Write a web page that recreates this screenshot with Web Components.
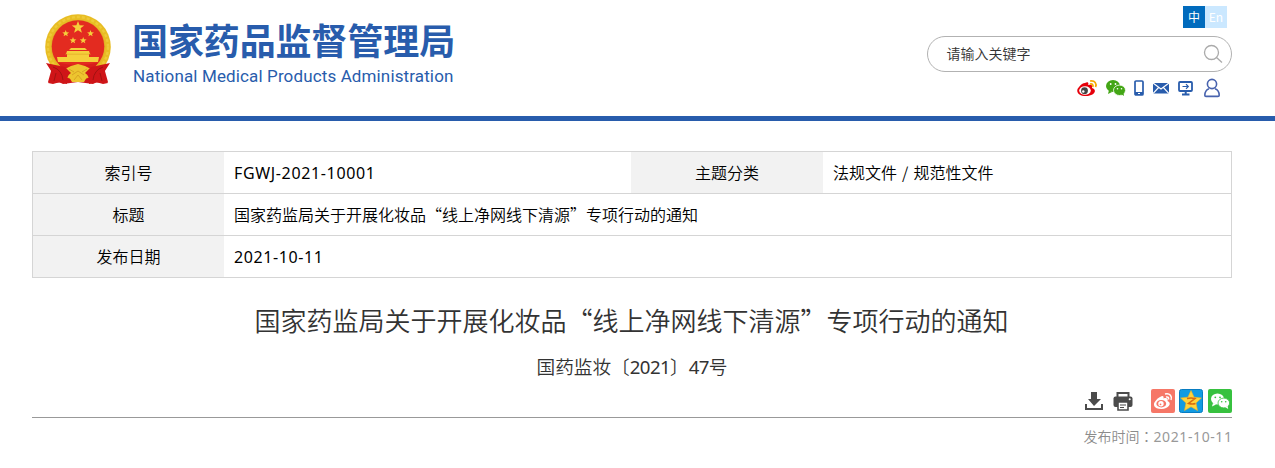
<!DOCTYPE html>
<html lang="zh-CN"><head><meta charset="utf-8"><title>国家药监局关于开展化妆品“线上净网线下清源”专项行动的通知</title>
<style>
body{margin:0;width:1275px;height:468px;overflow:hidden;background:#fff;color:#000;font-family:"Noto Sans CJK SC","Noto Sans",sans-serif;font-weight:350}
</style></head><body>
<site-header></site-header>
<info-table></info-table>
<notice-heading><span slot="title">国家药监局关于开展化妆品“线上净网线下清源”专项行动的通知</span></notice-heading>
<notice-tools></notice-tools>
<script>
const define=(name,html)=>{const t=document.createElement('template');t.innerHTML=html;
customElements.define(name,class extends HTMLElement{constructor(){super();this.attachShadow({mode:'open'}).appendChild(t.content.cloneNode(true))}})};

define('national-emblem',`<style>:host{display:block;width:68px;height:72px}svg{display:block}</style>
<svg width="68" height="72" viewBox="0 0 68 72">
<path d="M9 51L4 69l9-1 6 3 15-2 15 2 6-3 9 1-5-18z" fill="#cf1518"/>
<circle cx="34" cy="34" r="32.800" fill="#e8bd24"/>
<circle cx="34" cy="34" r="30" fill="none" stroke="#eeca38" stroke-width="2.400" stroke-dasharray="3 2"/>
<circle cx="34" cy="34" r="26.800" fill="none" stroke="#d9a727" stroke-width=".6"/>
<circle cx="34" cy="33.500" r="26.300" fill="#e32b20"/>
<g fill="#f5cf3b"><path id="s" d="M34 8l1.600 4.300 4.600.2-3.600 2.800 1.300 4.400L34 17.200l-3.900 2.500 1.300-4.400-3.600-2.800 4.600-.2z"/>
<use href="#s" transform="translate(3 12.500) scale(.55)"/><use href="#s" transform="translate(27.800 12.500) scale(.55)"/><use href="#s" transform="translate(10.300 19.500) scale(.55)"/><use href="#s" transform="translate(20.500 19.500) scale(.55)"/>
<path d="M25 37l2-2h14l2 2zM23 38h22l1 3H22zM23 41h22v3H23zM13 44h42l-1 5H14z"/></g>
<path d="M21 41.200h26" stroke="#d99520" stroke-width=".5"/>
<path d="M14 49.500q20 5 40 0-4 7-13 12l-7 6-7-6q-9-5-13-12z" fill="#d81e1c"/>
<path d="M21 56l6-3 7-2 7 2 6 3-5 4 1 4-3 5H28l-3-5 1-4z" fill="#edc52f"/>
<path d="M28 62l6-4 6 4M30 67l4-5 4 5M25 56l5 3M43 56l-5 3" fill="none" stroke="#d39b22" stroke-width=".8"/>
<path d="M2 50q9 2 19 4l6 6q-5 3-4 11-7-3-14 0l-5-1 5-9zM66 50q-9 2-19 4l-6 6q5 3 4 11 7-3 14 0l5-1-5-9z" fill="#cf1518"/>
<path d="M9 54q9 3 10 13M12 60l-2 8M59 54q-9 3-10 13M56 60l2 8" fill="none" stroke="#a11211"/>
</svg>`);

define('site-logo',`<style>:host{display:flex;color:#285cac}.words{margin-left:20px;padding-top:5px;white-space:nowrap}
.cn{font-size:36px;font-weight:700;line-height:42px;letter-spacing:-.1px}.en{font:17px/20px Roboto,"Liberation Sans",sans-serif;letter-spacing:.13px;margin:6px 0 0 1px}</style>
<national-emblem></national-emblem><div class="words"><div class="cn">国家药品监督管理局</div><div class="en">National Medical Products Administration</div></div>`);

define('language-switch',`<style>:host{display:flex;margin-right:5px;font-size:12px;font-weight:400;line-height:22px;text-align:center;color:#fff}span{width:22px;height:22px;background:#006bbd}.en{background:#cbe8ff}</style><span>中</span><span class="en">En</span>`);

define('search-box',`<style>:host{display:flex;box-sizing:border-box;width:305px;height:36px;border:1px solid #b2b2b2;border-radius:18px;align-items:center;justify-content:space-between;padding:0 8px 0 18.500px;font-size:14px;line-height:20px;color:#333}span{margin-top:-2px}</style>
<span>请输入关键字</span><svg width="20" height="20" fill="none" stroke="#aaa" stroke-width="1.300"><circle cx="8.500" cy="8.500" r="7"/><path d="M13.500 13.500l5.500 5"/></svg>`);

define('quick-links',`<style>:host{display:flex;align-items:center;height:20px;margin:6px 11px 0 0}svg{display:block}</style>
<svg width="21" height="18"><path d="M8 4c3-2 4 0 3 2 3-1 5 0 4 3 6 2 2 8-6 8S-2 12 2 8q3-4 6-4z" fill="#e6000b"/><ellipse cx="8" cy="11.500" rx="5.800" ry="4.300" fill="#fff"/><circle cx="7.500" cy="11.700" r="3.400" fill="#444"/><circle cx="6.300" cy="12.500" r="1.200" fill="#fff"/><path d="M13 2c5-1 7 3 5.500 6M13 5c2.500-.5 3.500 1 2.800 3" fill="none" stroke="#f5a900" stroke-width="1.700"/></svg>
<svg style="margin-left:8px" width="20" height="18"><g fill="#43a615"><ellipse cx="7" cy="7" rx="7" ry="6"/><path d="M3 11l-1 4 4-2z"/></g><ellipse cx="13.500" cy="11.300" rx="6" ry="5.200" fill="#43a615" stroke="#fff" stroke-width=".8"/><path d="M15 15l3 2-.5-3z" fill="#43a615"/><g fill="#fff"><circle cx="4.700" cy="5" r=".9"/><circle cx="9.500" cy="5" r=".9"/><circle cx="11.500" cy="9.800" r=".8"/><circle cx="15.500" cy="9.800" r=".8"/></g></svg>
<svg style="margin-left:8px" width="11" height="18"><rect x="1" y="2" width="8" height="14" rx="1" fill="none" stroke="#285cac" stroke-width="1.700"/><path d="M1 14.500h8" stroke="#285cac" stroke-width="3"/><path d="M4 14.500h2" stroke="#fff"/></svg>
<svg style="margin-left:8px" width="16" height="18"><path d="M0 4h16v10.500H0z" fill="#285cac"/><path d="M0 4l8 6 8-6M0 14.500l5.600-6M16 14.500l-5.600-6" fill="none" stroke="#fff" stroke-width="1.100"/></svg>
<svg style="margin-left:9px" width="16" height="18"><rect x="1" y="3" width="13" height="9" rx="1" fill="none" stroke="#285cac" stroke-width="1.800"/><path d="M4.500 7.500h6M8 5.200l2.300 2.300L8 9.800" fill="none" stroke="#285cac" stroke-width="1.200"/><path d="M4 15.500h7.500M7.700 12v3" fill="none" stroke="#285cac" stroke-width="2"/></svg>
<svg style="margin-left:10px" width="17" height="20"><circle cx="8" cy="6" r="4.600" fill="none" stroke="#4863ae" stroke-width="1.600"/><path d="M5 10.700C1.500 12 .9 14 .8 17.200q0 1.200 1.200 1.200h12q1.200 0 1.200-1.200C15.200 14 14.500 12 11 10.700" fill="none" stroke="#4863ae" stroke-width="1.600"/></svg>`);

define('site-header',`<style>:host{display:flex;box-sizing:border-box;height:121px;border-bottom:5px solid #285cac;justify-content:space-between;padding:0 43px 0 44px}site-logo{margin-top:13px}.right{display:flex;flex-direction:column;align-items:flex-end;padding-top:6px}search-box{margin-top:8px}</style>
<site-logo></site-logo><div class="right"><language-switch></language-switch><search-box></search-box><quick-links></quick-links></div>`);

define('info-table',`<style>:host{display:block;width:1198px;margin:30px 0 0 32px;border:1px solid #d5d5d5;font-size:16px;line-height:41px}
.row{display:grid;grid-template-columns:191px 1fr;grid-template-rows:41px;height:41px}.row+.row{border-top:1px solid #d5d5d5}.four{grid-template-columns:191px 407px 192px 1fr}b{font-weight:inherit;text-align:center;background:#f2f2f2}span{padding-left:10px}.lat{font-family:"Noto Sans","Noto Sans CJK SC",sans-serif;font-weight:400;line-height:43px}.code{letter-spacing:.65px}.date{letter-spacing:.6px}.cat{word-spacing:1.500px}</style>
<div class="row four"><b>索引号</b><span class="lat code">FGWJ-2021-10001</span><b>主题分类</b><span class="cat">法规文件 / 规范性文件</span></div>
<div class="row"><b>标题</b><span>国家药监局关于开展化妆品“线上净网线下清源”专项行动的通知</span></div>
<div class="row"><b>发布日期</b><span class="lat date">2021-10-11</span></div>`);

define('notice-heading',`<style>:host{display:block;width:1200px;margin:22px 0 0 31.500px;text-align:center;color:#333}h1{margin:0;font-size:26px;font-weight:inherit;line-height:40px}p{margin:11px 0 0 1px;font-size:18.670px;line-height:30px}i{font-style:normal;font-family:"Noto Sans",sans-serif;font-weight:400;letter-spacing:-.6px}</style>
<h1><slot name="title"></slot></h1><p>国药监妆〔<i>2021</i>〕<i>47</i>号</p>`);

define('notice-tools',`<style>:host{display:block;width:1200px;margin:7px 0 0 32px}.icons{display:flex;height:28px;justify-content:flex-end;border-bottom:1px solid #999}svg{display:block}.date{font:350 14px/20px "Noto Sans CJK SC",sans-serif;color:#8c8c8c;text-align:right;margin-top:8px}.date i{font-style:normal;font-family:"Noto Sans CJK TC",sans-serif;line-height:1}.date u{text-decoration:none;font-family:"Noto Sans",sans-serif;font-weight:400;color:#999;letter-spacing:.6px;margin-right:-.6px}</style>
<div class="icons">
<svg width="20" height="24" fill="#4b4b4b"><path d="M7 3h6v7h4l-7 7-6-7h3zM1 15h2v4h14v-4h2v6H1z"/></svg>
<svg style="margin-left:9px" width="20" height="24"><path d="M4.500 8V4h11v4" fill="#fff" stroke="#4b4b4b" stroke-width="2"/><rect x=".5" y="7.500" width="19" height="10.500" rx="2" fill="#4b4b4b"/><path d="M5 13h10v8H5z" fill="#fff" stroke="#4b4b4b" stroke-width="1.600"/><path d="M7 16h6M7 18.500h4" stroke="#4b4b4b"/><circle cx="16.700" cy="10.200" r="1" fill="#fff"/></svg>
<svg style="margin-left:18px" width="24" height="24"><rect width="24" height="24" rx="2" fill="#f67767"/><path d="M9 8c3-2 4-1 3.500 1.500 3-1 5 0 4 2.500 5 2 1 8-6 8-8 0-9-5-6-8q2-3 4.500-4z" fill="#fff"/><ellipse cx="10.300" cy="14.700" rx="4.900" ry="3.700" fill="#f67767"/><circle cx="10" cy="14.800" r="2.700" fill="#fff"/><circle cx="9.500" cy="15.300" r=".9" fill="#f67767"/><path d="M14 5c5-1.500 7.500 3 6 6M15 8c2-.5 3 .7 2.500 2.500" fill="none" stroke="#fff" stroke-width="1.500"/></svg>
<svg style="margin-left:4px" width="24" height="24"><rect x=".5" y=".5" width="23" height="23" rx="2" fill="#129be2" stroke="#087cc1"/><path d="M12 1.500l3.100 6.700 7.300.8-5.400 5 1.500 7.500-6.500-3.700-6.500 3.700L7 14 1.600 9l7.300-.8z" fill="#ffd43c" stroke="#f7b51f" stroke-width=".6"/><path d="M8 9.500q4-1 8 0l-6.500 5q4 1 7 0" fill="none" stroke="#d96b10" stroke-width="1.500"/></svg>
<svg style="margin-left:5px" width="24" height="24"><rect width="24" height="24" rx="2" fill="#37c13f"/><ellipse cx="9.500" cy="10" rx="6.500" ry="5.500" fill="#fff"/><path d="M5 14l-1 3.500 4-2z" fill="#fff"/><ellipse cx="15.800" cy="14" rx="5.800" ry="4.900" fill="#fff" stroke="#37c13f" stroke-width=".8"/><path d="M17 18l3.200 2-.6-3z" fill="#fff"/><g fill="#37c13f"><circle cx="7.300" cy="8.300" r=".9"/><circle cx="12" cy="8.300" r=".9"/><circle cx="13.700" cy="12.700" r=".8"/><circle cx="17.700" cy="12.700" r=".8"/></g></svg>
</div><div class="date">发布时间<i lang="zh-TW">：</i><u>2021-10-11</u></div>`);
</script></body></html>
